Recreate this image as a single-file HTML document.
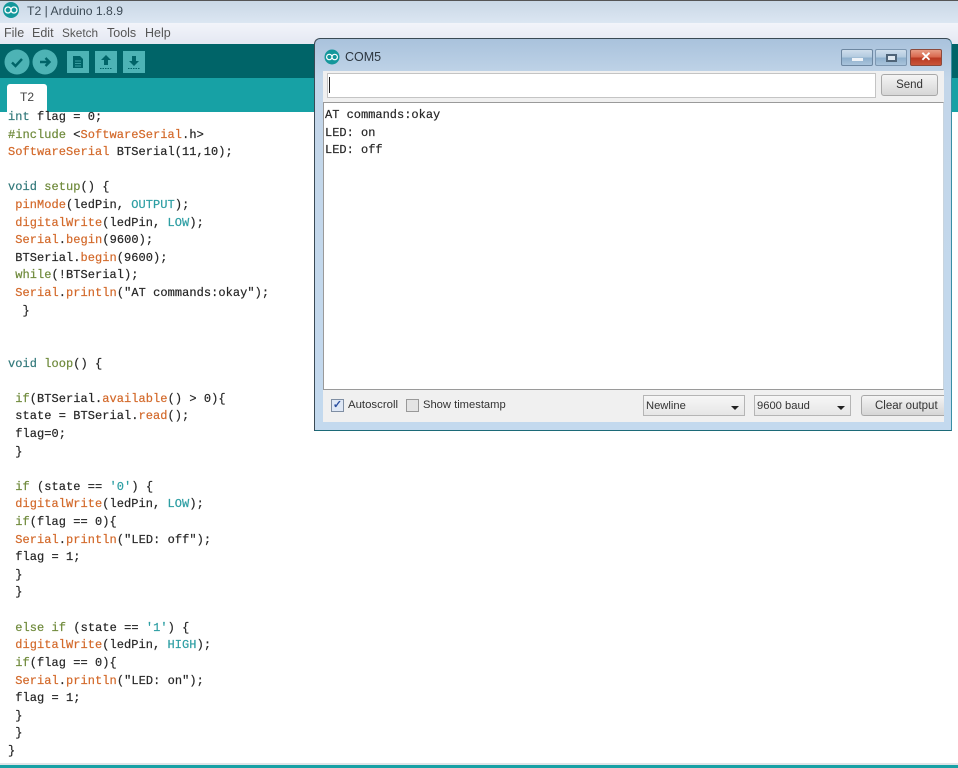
<!DOCTYPE html>
<html><head><meta charset="utf-8"><style>
html,body{margin:0;padding:0;width:958px;height:768px;overflow:hidden;background:#fff}
body{position:relative;font-family:"Liberation Sans",sans-serif;font-size:12px;color:#333}
div,span.a{position:absolute;box-sizing:border-box}
#code,#mon{font-family:"Liberation Mono",monospace;font-size:12px;white-space:pre;color:#262626;filter:blur(.3px);-webkit-text-stroke:.2px currentColor;letter-spacing:.05px}
#code{left:8px;top:109px;line-height:17.61px}
#mon{left:325px;top:107px;line-height:17.6px;font-size:12px;letter-spacing:0}
.k{color:#33797b}.g{color:#6f8a3b}.o{color:#d3692a}.t{color:#2d9ea3}
.btn{background:linear-gradient(#f4f4f4,#d6d6d6);border:1px solid #a8a8a8;border-radius:3px;text-align:center;color:#333}
.sel{background:linear-gradient(#f6f6f6,#e6e6e6);border:1px solid #b5b5b5;color:#333;padding-left:2px;line-height:20px}
.sel i{position:absolute;right:5px;top:10px;width:0;height:0;border:4px solid transparent;border-top:4px solid #222;border-bottom:0}
.m{top:25px;line-height:16px;color:#555;font-size:12.5px;white-space:nowrap}
.u{filter:blur(.25px)}
</style></head><body>
<div style="left:0;top:0;width:958px;height:23px;background:linear-gradient(#c9d7e5,#dbe6f2)"></div>
<div style="left:0;top:0;width:958px;height:1px;background:#555"></div>
<svg style="position:absolute;left:2px;top:1px" width="18" height="18" viewBox="0 0 18 18"><circle cx="9" cy="9" r="8" fill="#14979b"/><circle cx="6" cy="9" r="3" fill="none" stroke="#fff" stroke-width="1.3"/><circle cx="12" cy="9" r="3" fill="none" stroke="#fff" stroke-width="1.3"/></svg>
<div class="u" style="left:27px;top:3px;font-size:12.2px;line-height:16px;color:#3c4a55;white-space:nowrap">T2 | Arduino 1.8.9</div>
<div style="left:0;top:23px;width:958px;height:21px;background:linear-gradient(#f2f4fa,#e4e8f2)"></div>
<div class="m u" style="left:4px">File</div>
<div class="m u" style="left:32px">Edit</div>
<div class="m u" style="left:62px;font-size:11.800px">Sketch</div>
<div class="m u" style="left:107px">Tools</div>
<div class="m u" style="left:145px">Help</div>
<div style="left:0;top:44px;width:958px;height:34px;background:#006468"></div>
<div style="left:0;top:78px;width:958px;height:34px;background:#17a1a5"></div>
<div style="left:7px;top:84px;width:40px;height:28px;background:#fff;border-radius:3px 3px 0 0;text-align:center;line-height:27px;color:#444;font-size:12px">T2</div>
<svg style="position:absolute;left:0;top:44px" width="150" height="34" viewBox="0 0 150 34">
<circle cx="17" cy="18" r="12.5" fill="#4db3b5"/><circle cx="45" cy="18" r="12.5" fill="#4db3b5"/>
<path d="M12 18.500l3.500 3.500 6.500-7" fill="none" stroke="#006468" stroke-width="2.400"/>
<path d="M40 18h9M45.500 14l4 4-4 4" fill="none" stroke="#006468" stroke-width="2.400"/>
<rect x="67" y="7" width="22" height="22" fill="#4db3b5"/><rect x="95" y="7" width="22" height="22" fill="#4db3b5"/><rect x="123" y="7" width="22" height="22" fill="#4db3b5"/>
<path d="M73 12h7l3 3v9H73z" fill="#006468"/><path d="M75 17h6M75 19.500h6M75 22h6" stroke="#4db3b5" stroke-width=".8"/>
<path d="M106 11l5 5h-3v5h-4v-5h-3z" fill="#006468"/><path d="M100 24.500h12" stroke="#006468" stroke-dasharray="1.500 1"/>
<path d="M134 22l5-5h-3v-5h-4v5h-3z" fill="#006468"/><path d="M128 24.500h12" stroke="#006468" stroke-dasharray="1.500 1"/>
</svg>
<div id="code"><span class="k">int</span> flag = 0;
<span class="g">#include</span> &lt;<span class="o">SoftwareSerial</span>.h&gt;
<span class="o">SoftwareSerial</span> BTSerial(11,10);

<span class="k">void</span> <span class="g">setup</span>() {
 <span class="o">pinMode</span>(ledPin, <span class="t">OUTPUT</span>);
 <span class="o">digitalWrite</span>(ledPin, <span class="t">LOW</span>);
 <span class="o">Serial</span>.<span class="o">begin</span>(9600);
 BTSerial.<span class="o">begin</span>(9600);
 <span class="g">while</span>(!BTSerial);
 <span class="o">Serial</span>.<span class="o">println</span>("AT commands:okay");
  }


<span class="k">void</span> <span class="g">loop</span>() {

 <span class="g">if</span>(BTSerial.<span class="o">available</span>() &gt; 0){
 state = BTSerial.<span class="o">read</span>();
 flag=0;
 }

 <span class="g">if</span> (state == <span class="t">'0'</span>) {
 <span class="o">digitalWrite</span>(ledPin, <span class="t">LOW</span>);
 <span class="g">if</span>(flag == 0){
 <span class="o">Serial</span>.<span class="o">println</span>("LED: off");
 flag = 1;
 }
 }

 <span class="g">else</span> <span class="g">if</span> (state == <span class="t">'1'</span>) {
 <span class="o">digitalWrite</span>(ledPin, <span class="t">HIGH</span>);
 <span class="g">if</span>(flag == 0){
 <span class="o">Serial</span>.<span class="o">println</span>("LED: on");
 flag = 1;
 }
 }
}</div>
<div style="left:0;top:763px;width:958px;height:2px;background:#dfe5e8"></div>
<div style="left:0;top:765px;width:958px;height:3px;background:#17a1a5"></div>

<div style="left:314px;top:38px;width:638px;height:393px;border:1px solid #3a4a55;border-bottom-color:#1c6a78;border-right-color:#3a8ea5;border-radius:6px 6px 0 0;background:linear-gradient(#a9c2dc 0,#c3d6e9 40px,#c3d9ee 100%)"></div>
<svg style="position:absolute;left:324px;top:49px" width="16" height="16" viewBox="0 0 16 16"><circle cx="8" cy="8" r="7.500" fill="#14979b"/><circle cx="5.300" cy="8" r="2.700" fill="none" stroke="#fff" stroke-width="1.200"/><circle cx="10.700" cy="8" r="2.700" fill="none" stroke="#fff" stroke-width="1.200"/></svg>
<div class="u" style="left:345px;top:49px;line-height:16px;font-size:12.500px;color:#2c3640">COM5</div>
<div style="left:841px;top:49px;width:32px;height:17px;background:linear-gradient(#cfdeec 0,#b4cbe0 45%,#8fb0cd 55%,#a9c4dc 100%);border:1px solid #6d87a1;border-radius:2px"><div style="left:10px;top:8px;width:11px;height:3px;background:#eef3f8"></div></div>
<div style="left:875px;top:49px;width:32px;height:17px;background:linear-gradient(#cfdeec 0,#b4cbe0 45%,#8fb0cd 55%,#a9c4dc 100%);border:1px solid #7d97b1;border-radius:2px"><div style="left:10px;top:4px;width:11px;height:8px;border:2px solid #4f6478;background:#dfe8f0"></div></div>
<div style="left:910px;top:49px;width:32px;height:17px;background:linear-gradient(#e79c85 0,#d96a50 45%,#b93a22 55%,#c9553a 100%);border:1px solid #8c4a3c;border-radius:2px;color:#fff;font-weight:bold;text-align:center;line-height:14px;font-size:13px">✕</div>
<div style="left:323px;top:71px;width:621px;height:32px;background:#f0f0f0"></div>
<div style="left:327px;top:73px;width:549px;height:25px;background:#fff;border:1px solid #c4c4c4"></div>
<div style="left:329px;top:77px;width:1px;height:16px;background:#222"></div>
<div class="btn u" style="left:881px;top:74px;width:57px;height:22px;line-height:21px;font-size:11.500px">Send</div>
<div style="left:323px;top:102px;width:621px;height:288px;background:#fff;border:1px solid #9a9a9a;border-right-color:#c8d4de"></div>
<div id="mon">AT commands:okay
LED: on
LED: off</div>
<div style="left:323px;top:390px;width:621px;height:32px;background:#f0f0f0"></div>
<div style="left:331px;top:399px;width:13px;height:13px;background:#dfe8f6;border:1px solid #7f8ea3;color:#2a4fa0;font-size:11px;line-height:11px;text-align:center;font-weight:bold">✓</div>
<div class="u" style="left:348px;top:398px;line-height:15px;font-size:11.400px;white-space:nowrap">Autoscroll</div>
<div style="left:406px;top:399px;width:13px;height:13px;background:#e4e4e4;border:1px solid #999"></div>
<div class="u" style="left:423px;top:398px;line-height:15px;font-size:11.200px;white-space:nowrap">Show timestamp</div>
<div class="sel u" style="left:643px;top:395px;width:102px;height:21px;font-size:11.200px">Newline<i></i></div>
<div class="sel u" style="left:754px;top:395px;width:97px;height:21px;font-size:11.200px">9600 baud<i></i></div>
<div class="btn u" style="left:861px;top:395px;width:83px;height:21px;line-height:20px;font-size:11.500px;border-right:0;border-radius:3px 0 0 3px;padding-left:13px;white-space:nowrap;text-align:left">Clear output</div>
</body></html>
